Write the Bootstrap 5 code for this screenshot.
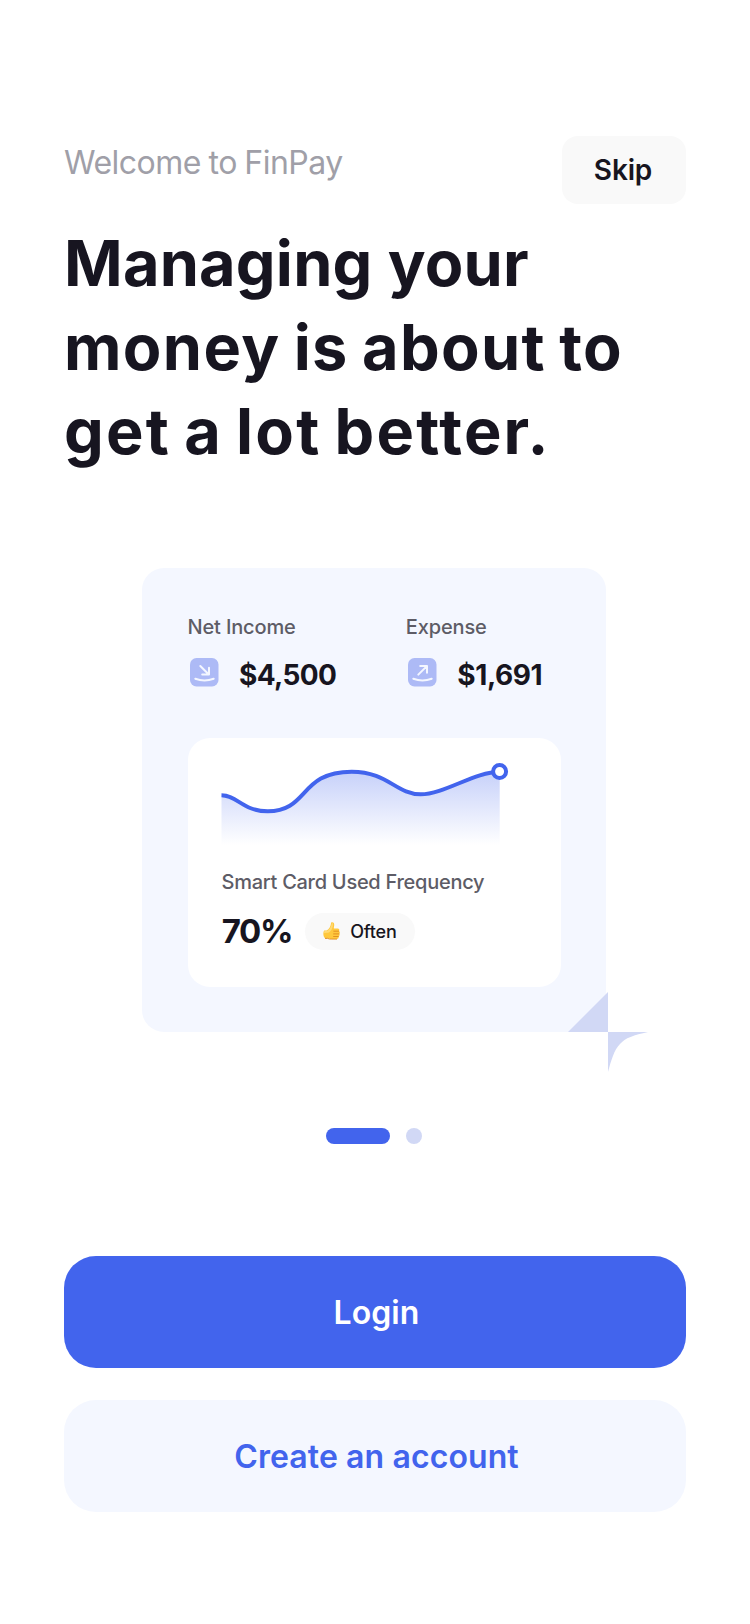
<!DOCTYPE html>
<html lang="en">
<head>
<meta charset="utf-8">
<meta name="viewport" content="width=device-width, initial-scale=1">
<title>FinPay</title>
<link href="https://cdn.jsdelivr.net/npm/bootstrap@5.3.0/dist/css/bootstrap.min.css" rel="stylesheet">
<style>
  :root { --ink: #171520; --brand: #4264ed; --tint: #f4f7ff; --lavender: #d1d8f5; }
  body { font-family: "Inter", "Liberation Sans", sans-serif; color: var(--ink); background: #fff; }
  .screen { width: 750px; min-height: 1624px; padding: 136px 64px 0; }
  .welcome { font-size: 32px; line-height: 40px; letter-spacing: -.5px; word-spacing: -1px; color: #a09fa8; margin-top: 7px; }
  .skip { --bs-btn-padding-y: 0; width: 124px; height: 68px; border: 0; border-radius: 16px; background: #f9f9f9; color: var(--ink); font-size: 28px; font-weight: 600; letter-spacing: -.16px; padding: 0 2px 0 0; }
  .headline { font-size: 63px; line-height: 84px; font-weight: 700; margin-top: 17px; color: var(--ink); }
  .headline span { white-space: nowrap; }
  .ln-1 { letter-spacing: .2px; }
  .ln-2 { letter-spacing: 1.35px; word-spacing: -3px; }
  .ln-3 { letter-spacing: 2.2px; word-spacing: -4px; }
  .promo { width: 464px; height: 464px; margin: 95px 0 0 78px; padding: 47px 45px 0 45.5px; border: 0; border-radius: 22px; background: var(--tint); color: var(--ink); }
  .stat { width: 218.3px; }
  .caption-text { font-size: 20px; line-height: 24px; font-weight: 500; letter-spacing: -.153px; color: #5d5c66; white-space: nowrap; }
  .stat-row { height: 40px; margin-top: 15px; padding-left: 2.5px; padding-bottom: 3px; }
  .amount { font-size: 28px; line-height: 40px; font-weight: 700; margin: 4px 0 0 20px; }
  .income { letter-spacing: -.67px; }
  .expense { letter-spacing: -.4px; }
  .usage { width: 373.5px; height: 249.5px; margin-top: 43.5px; padding: 22px 0 0 33.5px; border: 0; border-radius: 22px; background: #fff; color: var(--ink); }
  .usage .caption-text { letter-spacing: -.27px; margin-top: 20.5px; padding-left: .5px; }
  .usage-row { margin-top: 15px; height: 44px; }
  .percent { width: 84px; padding-left: .7px; font-size: 33px; line-height: 44px; font-weight: 700; letter-spacing: -1.25px; }
  .pill { width: 109.5px; height: 37px; background: #f9f9f9; font-size: 18px; font-weight: 500; letter-spacing: -.2px; padding-left: 16.5px; }
  .often { padding: 1px 0 0 .7px; }
  .sparkle { position: absolute; left: 426px; top: 424px; }
  .dots { margin-top: 96px; padding-right: 2px; }
  .dot { width: 16px; height: 16px; background: var(--lavender); }
  .dot.active { width: 64px; background: var(--brand); }
  .actions { margin-top: 112px; gap: 32px; }
  .action { width: 622px; height: 112px; border: 0; border-radius: 32px; font-size: 32px; font-weight: 600; letter-spacing: .1px; padding: 2px 0 0 3px; }
  .action-login { background: var(--brand); color: #fff; }
  .action-create { background: var(--tint); color: var(--brand); }
</style>
</head>
<body>
<main class="screen">
  <header class="d-flex justify-content-between align-items-start">
    <p class="welcome mb-0">Welcome to FinPay</p>
    <button class="btn skip" type="button">Skip</button>
  </header>
  <h1 class="headline mb-0"><span class="d-block ln-1">Managing your</span><span class="d-block ln-2">money is about to</span><span class="d-block ln-3">get a lot better.</span></h1>

  <section class="card promo">
    <div class="d-flex">
      <div class="stat flex-shrink-0">
        <div class="caption-text">Net Income</div>
        <div class="stat-row d-flex align-items-center">
          <svg width="29" height="29" viewBox="0 0 29 29" fill="none" stroke="#f4f7ff" stroke-width="2" stroke-linecap="round" stroke-linejoin="round">
            <rect width="28.5" height="28.5" rx="6.5" fill="#adbaf6" stroke="none"/>
            <path d="M10.3 8L18.6 16.2M19 9.8V16.6H12.2M5.3 20.7Q14.5 24.2 23.7 20.7"/>
          </svg>
          <span class="amount income">$4,500</span>
        </div>
      </div>
      <div class="flex-shrink-0">
        <div class="caption-text">Expense</div>
        <div class="stat-row d-flex align-items-center">
          <svg width="29" height="29" viewBox="0 0 29 29" fill="none" stroke="#f4f7ff" stroke-width="2" stroke-linecap="round" stroke-linejoin="round">
            <rect width="28.5" height="28.5" rx="6.5" fill="#adbaf6" stroke="none"/>
            <path d="M10.3 16.6L18.6 8.4M12.2 8H19V14.8M5.3 20.7Q14.5 24.2 23.7 20.7"/>
          </svg>
          <span class="amount expense">$1,691</span>
        </div>
      </div>
    </div>

    <div class="card usage">
      <svg class="d-block" width="290" height="90" viewBox="221 760 290 90">
        <defs>
          <linearGradient id="fade" x1="0" y1="771" x2="0" y2="845" gradientUnits="userSpaceOnUse">
            <stop offset="0" stop-color="#4264ed" stop-opacity=".3"/>
            <stop offset="1" stop-color="#4264ed" stop-opacity="0"/>
          </linearGradient>
        </defs>
        <path fill="url(#fade)" d="M221.5 795.3C237 795.3 243 811.3 267.7 811.3C309 811.3 299 771.7 351.7 771.7C388 771.7 396 794.3 420.7 794.3C444 794.3 475 771.7 499.7 771.7V846H221.5Z"/>
        <path fill="none" stroke="#4264ed" stroke-width="4" d="M221.5 795.3C237 795.3 243 811.3 267.7 811.3C309 811.3 299 771.7 351.7 771.7C388 771.7 396 794.3 420.7 794.3C444 794.3 475 771.7 499.7 771.7"/>
        <circle cx="499.6" cy="771.5" r="6.5" fill="#fff" stroke="#4264ed" stroke-width="4"/>
      </svg>
      <div class="caption-text">Smart Card Used Frequency</div>
      <div class="usage-row d-flex align-items-center">
        <span class="percent">70%</span>
        <span class="pill rounded-pill d-flex align-items-center">
          <svg class="me-2" width="20" height="20" viewBox="0 0 20 20">
            <path fill="#ffc83d" d="M9.2 1.6C10.6.9 12.2 1.8 12.2 3.6C12.3 5.5 11.6 7 11.9 7.4H15.6C17.3 7.4 17.9 9 17 10C18.2 10.7 18.1 12.3 17.2 12.8C17.9 13.8 17.5 15 16.6 15.5C17 16.8 16.2 18 14.7 18H8.6C7.3 18 6.4 17.3 5.6 17.3H3.2C1 15.9.9 11.4 2.2 9.6H4.6C7.4 8.4 8.6 5.7 9.2 1.6Z"/>
            <path fill="#ffda75" d="M9.9 2C11 1.8 11.2 3.2 10.8 5C10.3 7.3 9.5 9.7 7 11.6C5 12 3 11.8 2.2 12.3C2 11 2.3 10.2 2.7 10H5C8 8.6 9.1 5.6 9.9 2Z"/>
            <path fill="none" stroke="#e08a1e" stroke-width=".9" stroke-linecap="round" d="M11.8 10.2H16.6M11.6 12.9H17M11.6 15.5H16.3M3.4 17.4H5.6Q7.4 18.2 9.2 18.1H14.6"/>
          </svg>
          <span class="often">Often</span>
        </span>
      </div>
    </div>

    <svg class="sparkle" width="80" height="80" viewBox="0 0 80 80" fill="#d1d8f5">
      <path d="M0 40L40 0V40Z"/>
      <path d="M40 40H80C66 43 57 46 52 52C46 58 43 69 40 80Z"/>
    </svg>
  </section>

  <div class="dots d-flex justify-content-center gap-3">
    <span class="dot active rounded-pill"></span>
    <span class="dot rounded-pill"></span>
  </div>

  <div class="actions d-flex flex-column">
    <button class="btn action action-login" type="button">Login</button>
    <button class="btn action action-create" type="button">Create an account</button>
  </div>
</main>
<script src="https://cdn.jsdelivr.net/npm/bootstrap@5.3.0/dist/js/bootstrap.bundle.min.js"></script>
</body>
</html>
